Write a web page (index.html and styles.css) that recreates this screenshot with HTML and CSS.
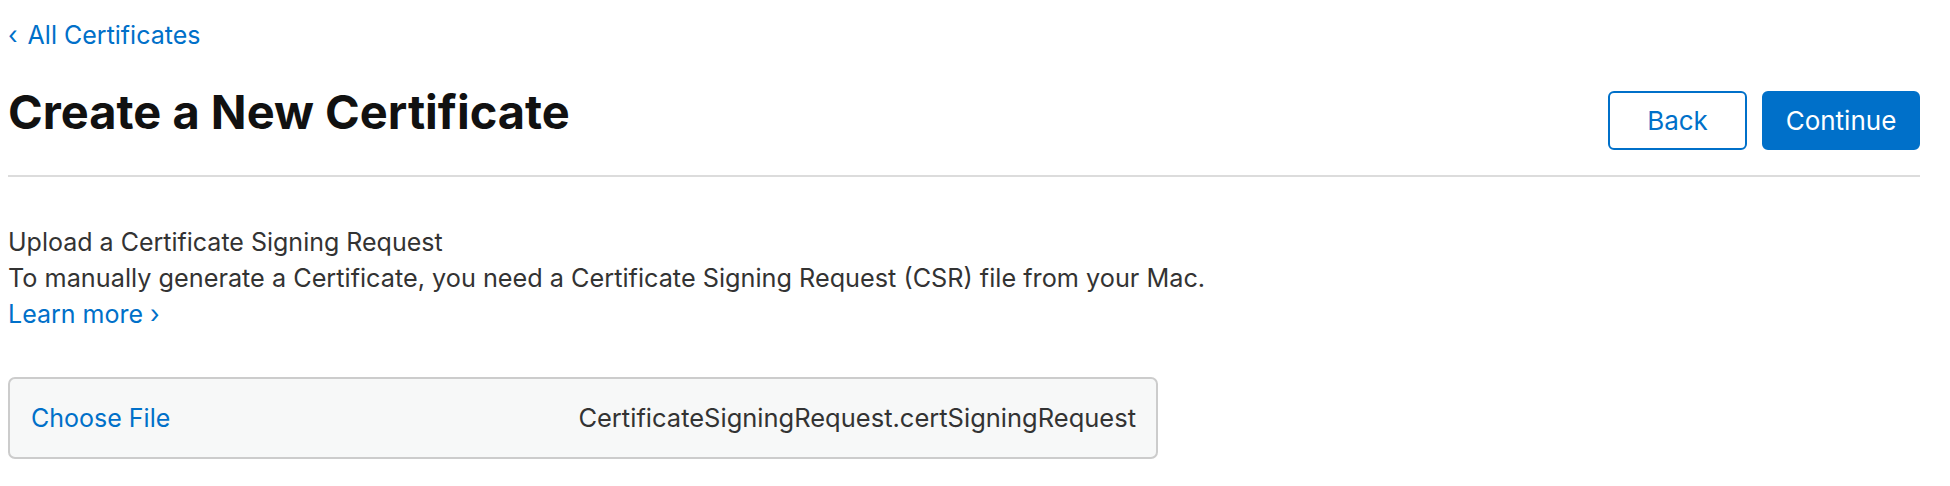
FILE: index.html
```html
<!DOCTYPE html>
<html lang="en">
<head>
<meta charset="utf-8">
<title>Create a New Certificate</title>
<link rel="stylesheet" href="styles.css">
</head>
<body>
<div class="page">
  <a class="crumb" href="#"><span class="crumb-chev">‹</span>All Certificates</a>
  <header class="header">
    <h1 class="title">Create a New Certificate</h1>
    <div class="actions">
      <button class="btn btn-secondary" type="button">Back</button>
      <button class="btn btn-primary" type="button">Continue</button>
    </div>
  </header>
  <section class="upload">
    <h2 class="upload-title">Upload a Certificate Signing Request</h2>
    <p class="upload-desc">To manually generate a Certificate, you need a Certificate Signing Request (CSR) file from your Mac.</p>
    <a class="learn" href="#">Learn more ›</a>
    <div class="file-box">
      <span class="file-choose">Choose File</span>
      <span class="file-name">CertificateSigningRequest.certSigningRequest</span>
    </div>
  </section>
</div>
</body>
</html>
```
FILE: styles.css
```css
html, body {
  margin: 0;
  padding: 0;
  background: #ffffff;
}
body {
  font-family: Inter, "Noto Sans", "Liberation Sans", sans-serif;
  color: #333333;
}
.page {
  padding: 0 30px 0 8px;
}
a {
  color: #0070c9;
  text-decoration: none;
}
.crumb {
  display: block;
  margin-top: 21px;
  font-size: 25px;
  line-height: 28px;
}
.crumb-chev {
  display: inline-block;
  margin-right: 10px;
}
.header {
  display: flex;
  justify-content: space-between;
  align-items: flex-start;
  margin-top: 34px;
  padding-bottom: 25px;
  border-bottom: 2px solid #dcdcdc;
}
.title {
  margin: 0;
  font-size: 47px;
  line-height: 58px;
  font-weight: 700;
  color: #111111;
}
.actions {
  display: flex;
  gap: 15px;
  margin-top: 8px;
}
.btn {
  font-family: inherit;
  font-size: 26px;
  height: 59px;
  border-radius: 6px;
  cursor: pointer;
  box-sizing: border-box;
  padding: 0;
}
.btn-secondary {
  width: 139px;
  background: #ffffff;
  color: #0070c9;
  border: 2px solid #0070c9;
}
.btn-primary {
  width: 158px;
  background: #0070c9;
  color: #ffffff;
  border: 2px solid #0070c9;
}
.upload {
  padding-top: 47px;
  font-size: 25px;
  line-height: 36px;
}
.upload-title {
  margin: 0;
  font-size: 25px;
  line-height: 36px;
  font-weight: 400;
  color: #333333;
}
.upload-desc {
  margin: 0;
  font-size: 25.25px;
}
.learn {
  display: block;
}
.file-box {
  display: flex;
  justify-content: space-between;
  align-items: center;
  box-sizing: border-box;
  width: 1150px;
  height: 82px;
  margin-top: 45px;
  padding: 0 20px 0 21px;
  background: #f7f8f8;
  border: 2px solid #cccccc;
  border-radius: 7px;
}
.file-choose {
  color: #0070c9;
}
.file-name {
  color: #333333;
  font-size: 25.5px;
}
```
